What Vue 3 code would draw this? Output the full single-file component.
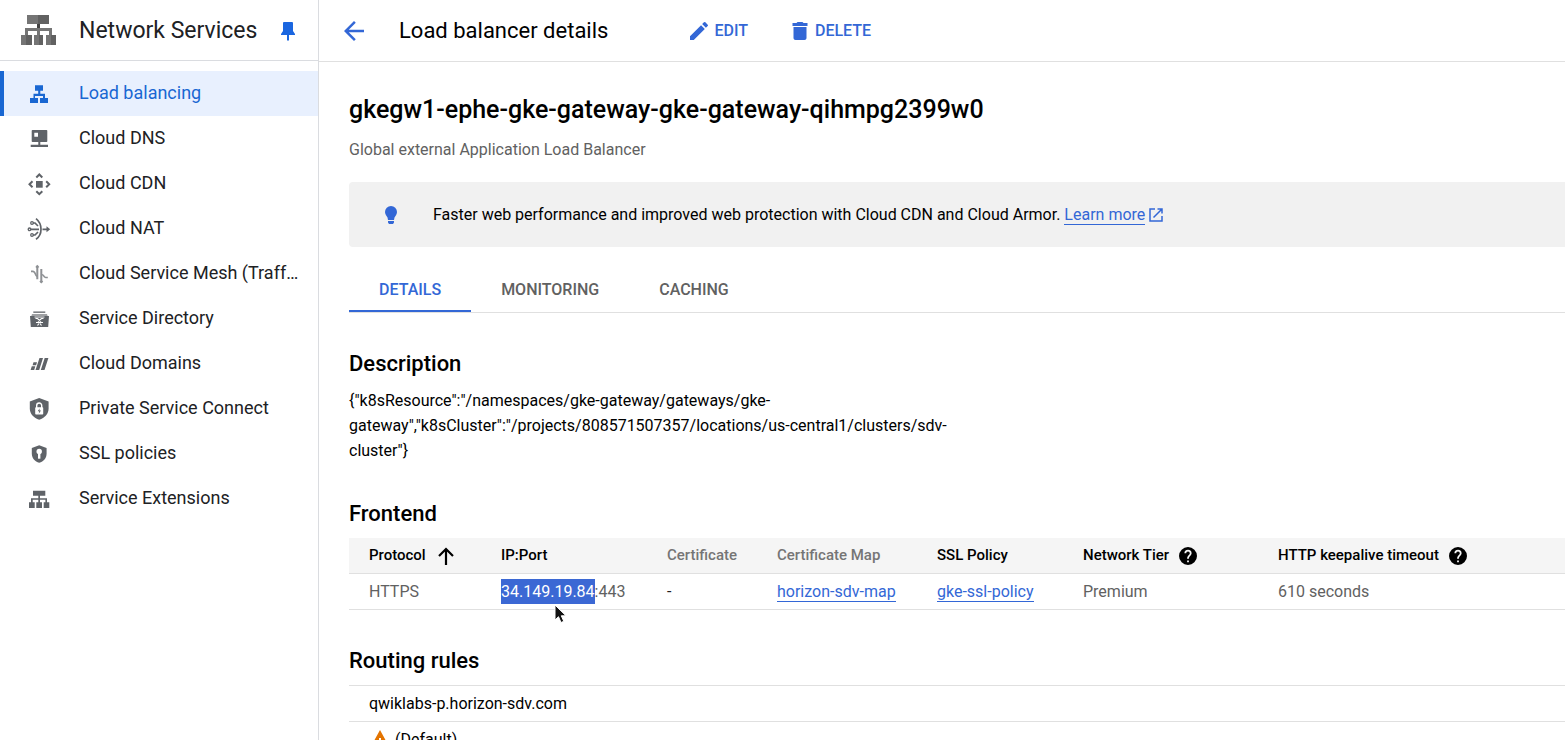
<script setup>
import { ref } from 'vue'

const navItems = [
  { label: 'Load balancing', icon: 'load' },
  { label: 'Cloud DNS', icon: 'dns' },
  { label: 'Cloud CDN', icon: 'cdn' },
  { label: 'Cloud NAT', icon: 'nat' },
  { label: 'Cloud Service Mesh (Traff…', icon: 'mesh' },
  { label: 'Service Directory', icon: 'directory' },
  { label: 'Cloud Domains', icon: 'domains' },
  { label: 'Private Service Connect', icon: 'psc' },
  { label: 'SSL policies', icon: 'ssl' },
  { label: 'Service Extensions', icon: 'extensions' }
]
const activeNav = ref('load')

const tabs = ['DETAILS', 'MONITORING', 'CACHING']
const activeTab = ref('DETAILS')
</script>

<template>
  <div class="layout">
    <aside class="sidebar">
      <header class="product">
        <svg class="product-icon" viewBox="0 0 35 30" aria-hidden="true">
          <path fill="#757575" d="M6 0h11v9H6zM0 20h5v10H0zM13 20h5v10h-5zM25 20h5v10h-5z" />
          <path fill="#616161" d="M17 0h11v9H17zM5 20h6v10H5zM18 20h4v10h-4zM30 20h5v10h-5z" />
          <path fill="#757575" d="M4 13h27v7h-3v-4H19v4h-3v-4H7v4H4z" />
          <path fill="#424242" d="M16 9h3v4h-3z" />
        </svg>
        <h2 class="product-name">Network Services</h2>
        <button class="pin" type="button" aria-label="Unpin">
          <svg viewBox="0 0 14 19" aria-hidden="true">
            <path fill="currentColor" d="M3 0h8q1 0 1 1v8l2 3v1H8v5l-1 1-1-1v-5H0v-1l2-3V1q0-1 1-1z" />
          </svg>
        </button>
      </header>
      <nav class="nav">
        <a
          v-for="item in navItems"
          :key="item.icon"
          href="#"
          class="nav-item"
          :class="{ active: item.icon === activeNav }"
          @click.prevent="activeNav = item.icon"
        >
          <svg class="nav-icon" viewBox="0 0 24 24" fill="currentColor" aria-hidden="true">
            <path v-if="item.icon === 'load'" d="M8 3.300h8v5.500h-2.700v3H18v4.200h3v5h-8v-5h3v-2H8v2h3v5H3v-5h3.500v-4.200h4.700v-3H8z" />
            <path v-else-if="item.icon === 'dns'" fill-rule="evenodd" d="M5.500 3h14q.8 0 .8.8v10.400q0 .8-.8.8h-6.200v2.700H21V20H3.700v-2.300h7.600V15H5.500q-.8 0-.8-.8V3.800q0-.8.8-.8zM7.300 5.700v4H11v-4z" />
            <g v-else-if="item.icon === 'cdn'">
              <path d="M9 9h6.700v6.700H9z" />
              <path class="stroke" stroke-width="2" d="M9.300 5.500l3-3 3 3M9.300 19.200l3 3 3-3M5.500 9.300l-3 3 3 3M19.200 9.300l3 3-3 3" />
            </g>
            <g v-else-if="item.icon === 'nat'">
              <path class="stroke" stroke-width="1.700" d="M9 1.700q5 4 5 10.600t-5 10M4 12.300h8M15.500 12.300h5M6 6h2l3 3M6 18h2l3-3" />
              <path d="M19.500 9.300l3.700 3-3.700 3z" />
              <g class="stroke" stroke-width="1.300">
                <circle cx="5" cy="6" r="1.300" />
                <circle cx="2.500" cy="12.300" r="1.300" />
                <circle cx="5" cy="18" r="1.300" />
              </g>
            </g>
            <g v-else-if="item.icon === 'mesh'" class="stroke mesh" stroke-width="2">
              <path d="M10.300 3.700v13.500M14.300 7v13.500" />
              <path stroke-width="1.700" d="M4 9.300h2q1.600.3 2.300 2.500t2 2.700M20.800 15.500h-2q-1.500-.3-2-1.500t-2.500-1.500M9 5.500l1.300-1.500 1.300 1.500M13 19l1.300 1.300L15.600 19" />
            </g>
            <g v-else-if="item.icon === 'directory'">
              <path d="M6.300 4.500h12v1.300h-12z" />
              <path opacity=".6" d="M5 7h15l1 3H4z" />
              <path d="M3 9h4.500v1.500h10V9H22l-.8 11H3.800z" />
              <path fill="none" stroke="#fff" stroke-width="1.200" d="M8.500 11.500h2l3.500 3M16.500 11.500h-2l-3.500 3M9 15.500h7M10.500 18.500l1.500-2M14.500 18.500l-1.500-2" />
            </g>
            <path v-else-if="item.icon === 'domains'" d="M12.500 6H16l-3.800 12H8.500zM17.700 6h3.700l-3.900 12h-3.700zM6.500 10.300H10l-.9 2.900H5.600zM4.800 14.300h3.500L7.200 18H3.600z" />
            <g v-else-if="item.icon === 'psc'">
              <path d="M12.200 1l9.400 3.400v7.100c0 5.300-3.900 9.500-9.400 11.200-5.500-1.700-9.400-5.900-9.400-11.200V4.400z" />
              <path fill="none" stroke="#fff" stroke-width="1.400" d="M9.700 11V8.500a2.500 2.500 0 0 1 5 0V11" />
              <path fill="#fff" d="M9 10.300h6.400q.8 0 .8.800v5.600q0 .8-.8.8H9q-.8 0-.8-.8v-5.600q0-.8.8-.8z" />
              <path d="M12.700 11.300l-2 3h1.500l-.5 2.500 2.300-3.300h-1.600z" />
            </g>
            <g v-else-if="item.icon === 'ssl'">
              <path d="M12.200 3.300l7.400 2.800v5.600c0 4.300-3.100 7.700-7.400 9-4.300-1.300-7.400-4.700-7.400-9V6.100z" />
              <circle fill="#fff" cx="12.200" cy="9.500" r="2.700" />
              <path fill="#fff" d="M11 11h2.400v5.700H11z" />
            </g>
            <path v-else d="M6 3.700h12.300v5H13v2.600h7v4h2.300V21h-5.600v-5.700h1.700v-2.500H13v2.500h2V21H9.300v-5.700h2v-2.500H5.700v2.500h2V21H2v-5.700h2v-4h7.300V8.700H6z" />
          </svg>
          <span class="nav-label">{{ item.label }}</span>
        </a>
      </nav>
    </aside>

    <main class="main">
      <header class="toolbar">
        <button class="back" type="button" aria-label="Back">
          <svg viewBox="0 0 24 24" aria-hidden="true"><path fill="currentColor" d="M20 11H7.830l5.590-5.590L12 4l-8 8 8 8 1.410-1.410L7.830 13H20z" /></svg>
        </button>
        <h1 class="toolbar-title">Load balancer details</h1>
        <button class="action" type="button">
          <svg viewBox="0 0 24 24" aria-hidden="true"><path fill="currentColor" d="M3 17.250V21h3.750L17.810 9.940l-3.750-3.750zM20.710 7.040a1 1 0 0 0 0-1.410l-2.340-2.340a1 1 0 0 0-1.410 0l-1.830 1.830 3.750 3.750z" /></svg>
          EDIT
        </button>
        <button class="action" type="button">
          <svg viewBox="0 0 24 24" aria-hidden="true"><path fill="currentColor" d="M5.500 19c0 1.100.9 2 2 2h9c1.100 0 2-.9 2-2V8h-13zM19.500 4h-4l-1-1h-5l-1 1h-4v3h15z" /></svg>
          DELETE
        </button>
      </header>

      <div class="content">
        <h2 class="name">gkegw1-ephe-gke-gateway-gke-gateway-qihmpg2399w0</h2>
        <p class="kind">Global external Application Load Balancer</p>

        <div class="banner">
          <svg class="bulb" viewBox="0 0 12 18" aria-hidden="true">
            <path fill="currentColor" d="M6 0a6 6 0 0 1 6 6c0 2.300-1.500 3.600-2.500 5.500L9 14H3l-.5-2.500C1.500 9.600 0 8.300 0 6a6 6 0 0 1 6-6zM3 15h6v1.500L8 18H4l-1-1.500z" />
          </svg>
          <p class="banner-text">
            Faster web performance and improved web protection with Cloud CDN and Cloud Armor.
            <a href="#" class="link">Learn more</a>
            <svg class="external" viewBox="0 0 14 14" aria-hidden="true">
              <path fill="none" stroke="currentColor" stroke-width="1.500" d="M6 1H1v12h12V8M8.500 1H13v4.500M13 1L4.500 9.500" />
            </svg>
          </p>
        </div>

        <div class="tabs" role="tablist">
          <button
            v-for="tab in tabs"
            :key="tab"
            type="button"
            role="tab"
            class="tab"
            :class="{ selected: tab === activeTab }"
            :aria-selected="tab === activeTab"
            @click="activeTab = tab"
          >{{ tab }}</button>
        </div>

        <section>
          <h3 class="heading">Description</h3>
          <p class="description">{"k8sResource":"/namespaces/gke-gateway/gateways/gke-gateway","k8sCluster":"/projects/808571507357/locations/us-central1/clusters/sdv-cluster"}</p>
        </section>

        <section>
          <h3 class="heading">Frontend</h3>
          <table class="table">
            <colgroup>
              <col class="col-protocol" />
              <col class="col-ip" />
              <col class="col-cert" />
              <col class="col-map" />
              <col class="col-policy" />
              <col class="col-tier" />
              <col />
            </colgroup>
            <thead>
              <tr>
                <th scope="col" aria-sort="ascending">
                  <span class="th th-sorted">Protocol
                    <svg class="sort" viewBox="0 0 16 18" aria-hidden="true"><path fill="none" stroke="currentColor" stroke-width="2.200" d="M8 18V2M1 9l7-7 7 7" /></svg>
                  </span>
                </th>
                <th scope="col">IP:Port</th>
                <th scope="col" class="muted">Certificate</th>
                <th scope="col" class="muted">Certificate Map</th>
                <th scope="col">SSL Policy</th>
                <th v-for="label in ['Network Tier', 'HTTP keepalive timeout']" :key="label" scope="col">
                  <span class="th">{{ label }}
                    <svg class="help" viewBox="2 2 20 20" aria-hidden="true"><path fill="currentColor" d="M12 2a10 10 0 1 0 0 20 10 10 0 0 0 0-20zm1 17h-2v-2h2zm2.070-7.750l-.9.920C13.450 12.900 13 13.500 13 15h-2v-.5c0-1.100.45-2.100 1.170-2.830l1.240-1.260c.37-.36.590-.860.590-1.410a2 2 0 0 0-4 0H8a4 4 0 0 1 8 0c0 .88-.360 1.680-.930 2.250z" /></svg>
                  </span>
                </th>
              </tr>
            </thead>
            <tbody>
              <tr>
                <td>HTTPS</td>
                <td class="ip">
                  <span class="picked">34.149.19.84</span>:443
                  <svg class="cursor" viewBox="0 0 14 20" aria-hidden="true"><path fill="#111" stroke="#fff" d="M1 1v15l3.500-3.300L7 18.500l2.800-1.200-2.500-5.500H12z" /></svg>
                </td>
                <td class="dark">-</td>
                <td><a href="#" class="link">horizon-sdv-map</a></td>
                <td><a href="#" class="link">gke-ssl-policy</a></td>
                <td>Premium</td>
                <td>610 seconds</td>
              </tr>
            </tbody>
          </table>
        </section>

        <section>
          <h3 class="heading">Routing rules</h3>
          <ul class="rules">
            <li class="rule">qwiklabs-p.horizon-sdv.com</li>
            <li class="rule">
              <svg class="warning" viewBox="0 0 22 20" aria-hidden="true"><path fill="#e37400" fill-rule="evenodd" d="M11 0l11 20H0zM10 8v6h2V8zM10 15.500v2h2v-2z" /></svg>
              (Default)
            </li>
          </ul>
        </section>
      </div>
    </main>
  </div>
</template>

<style>
body {
  margin: 0;
  background: #fff;
}
</style>

<style scoped>
* {
  box-sizing: border-box;
}

.layout {
  display: flex;
  height: 100vh;
  overflow: hidden;
  font-family: Roboto, "Liberation Sans", sans-serif;
  font-size: 16px;
  line-height: 25px;
  color: #000;
}

h1, h2, h3, p, ul {
  margin: 0;
  padding: 0;
}

button {
  padding: 0;
  border: 0;
  background: none;
  font: inherit;
  color: #3367d6;
  cursor: pointer;
}

svg {
  display: block;
  flex: none;
}

.stroke {
  fill: none;
  stroke: currentColor;
}

.mesh {
  opacity: 0.7;
}

.sidebar {
  flex: none;
  width: 319px;
  border-right: 1px solid #dadce0;
}

.product {
  display: flex;
  align-items: center;
  height: 61px;
  padding: 0 23px 0 21px;
  border-bottom: 1px solid #dadce0;
}

.product-icon {
  width: 35px;
  height: 30px;
}

.product-name {
  flex: 1;
  margin-left: 23px;
  font-size: 23px;
  font-weight: 400;
  color: #202124;
}

.pin {
  color: #1a66e0;
}

.pin svg {
  width: 14px;
  height: 19px;
  margin-top: 3px;
}

.nav {
  padding-top: 10px;
}

.nav-item {
  display: flex;
  align-items: center;
  height: 45px;
  padding: 0 12px 0 23px;
  border-left: 4px solid transparent;
  color: #202124;
  text-decoration: none;
}

.nav-icon {
  width: 24px;
  height: 24px;
  margin-right: 28px;
  color: #5f6368;
}

.nav-label {
  padding-bottom: 2px;
  font-size: 18px;
  white-space: nowrap;
}

.nav-item.active {
  border-left-color: #1967d2;
  background: #e8f0fe;
  color: #1967d2;
}

.nav-item.active .nav-icon {
  color: #1967d2;
}

.main {
  flex: 1;
  min-width: 0;
}

.toolbar {
  display: flex;
  align-items: center;
  height: 62px;
  padding-left: 20px;
  border-bottom: 1px solid #e0e0e0;
}

.back svg {
  width: 30px;
  height: 30px;
}

.toolbar-title {
  margin: 0 79px 0 30px;
  font-size: 22px;
  font-weight: 400;
}

.action {
  display: flex;
  align-items: center;
  gap: 3px;
  margin-right: 40px;
  font-weight: 500;
}

.action svg {
  width: 24px;
  height: 24px;
}

.content {
  padding-left: 30px;
}

.name {
  padding-top: 33px;
  font-size: 25px;
  font-weight: 500;
  line-height: 30px;
}

.kind {
  margin-top: 12px;
  color: #616161;
}

.banner {
  display: flex;
  align-items: center;
  gap: 36px;
  min-height: 65px;
  margin-top: 20px;
  padding-left: 36px;
  border-radius: 4px 0 0 4px;
  background: #f1f1f1;
}

.bulb {
  width: 12px;
  height: 18px;
  color: #3367d6;
}

.link {
  border-bottom: 1px solid #3367d6;
  color: #3367d6;
  text-decoration: none;
}

.external {
  display: inline-block;
  width: 14px;
  height: 14px;
  margin-left: 4px;
  color: #3367d6;
  vertical-align: -2px;
}

.tabs {
  display: flex;
  margin-top: 20px;
  border-bottom: 1px solid #e0e0e0;
}

.tab {
  height: 45px;
  padding: 2px 30px 0;
  border-bottom: 2px solid transparent;
  font-weight: 500;
  color: #616161;
}

.tab.selected {
  border-bottom-color: #3367d6;
  color: #3367d6;
}

.heading {
  font-size: 22px;
  font-weight: 500;
  line-height: 30px;
  padding-top: 36px;
}

.description {
  max-width: 625px;
  margin-top: 9px;
}

.table {
  width: 100%;
  margin-top: 9px;
  border-collapse: separate;
  border-spacing: 0;
  table-layout: fixed;
}

.col-protocol { width: 132px; }
.col-ip { width: 166px; }
.col-cert { width: 110px; }
.col-map { width: 160px; }
.col-policy { width: 146px; }
.col-tier { width: 195px; }

th, td {
  height: 36px;
  padding: 0 0 0 20px;
  border-bottom: 1px solid #e0e0e0;
  text-align: left;
  white-space: nowrap;
}

th {
  background: #f5f5f5;
  font-size: 15px;
  font-weight: 500;
}

td {
  color: #616161;
}

.muted {
  color: #757575;
}

.dark {
  color: #212121;
}

.th {
  display: flex;
  align-items: center;
  gap: 10px;
}

.th-sorted {
  gap: 12px;
}

.sort {
  width: 16px;
  height: 18px;
}

.help {
  width: 18px;
  height: 18px;
}

.ip {
  position: relative;
}

.picked {
  display: inline-block;
  background: #3b68d4;
  color: #fff;
}

.cursor {
  position: absolute;
  top: 30px;
  left: 73px;
  width: 14px;
  height: 20px;
}

.rules {
  margin-top: 9px;
  list-style: none;
}

.rule {
  display: flex;
  align-items: center;
  gap: 4px;
  height: 36px;
  padding-left: 20px;
  border-top: 1px solid #e0e0e0;
}

.warning {
  width: 22px;
  height: 20px;
}
</style>
